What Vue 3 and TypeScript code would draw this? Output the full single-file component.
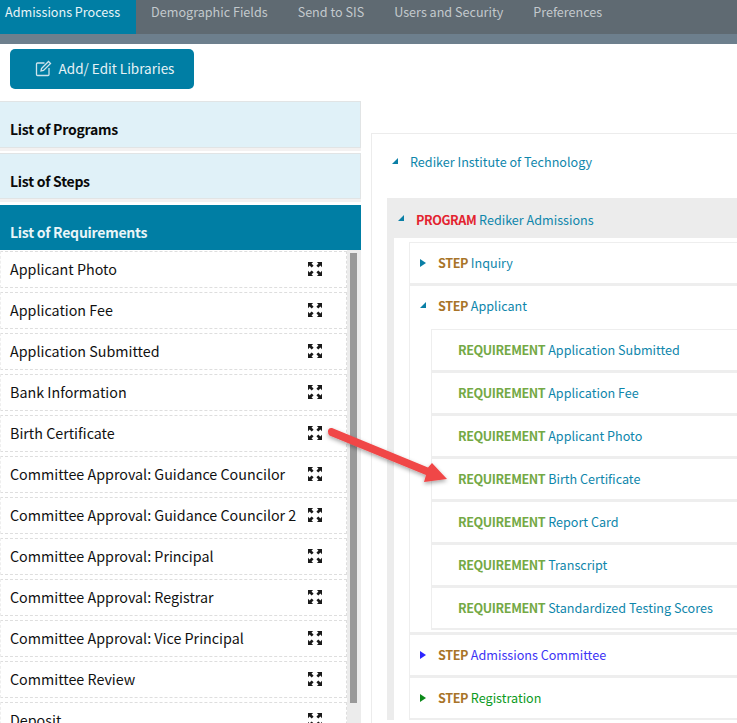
<script setup lang="ts">
const tabs = ['Admissions Process', 'Demographic Fields', 'Send to SIS', 'Users and Security', 'Preferences']
const items = [
  'Applicant Photo', 'Application Fee', 'Application Submitted', 'Bank Information', 'Birth Certificate',
  'Committee Approval: Guidance Councilor', 'Committee Approval: Guidance Councilor 2', 'Committee Approval: Principal',
  'Committee Approval: Registrar', 'Committee Approval: Vice Principal', 'Committee Review', 'Deposit'
]
const reqs = ['Application Submitted', 'Application Fee', 'Applicant Photo', 'Birth Certificate', 'Report Card', 'Transcript', 'Standardized Testing Scores']
</script>

<template>
  <div class="page">
    <nav class="tabs">
      <span v-for="(t, i) in tabs" :key="t" class="tab" :class="{ active: i === 0 }">{{ t }}</span>
    </nav>
    <div class="band"></div>
    <div class="content">
      <aside class="left">
        <button class="btn">
          <svg width="17" height="17" viewBox="0 0 17 17" fill="none" stroke="#cfe4ec" stroke-width="1.3">
            <path d="M9.500 3H2.500a1 1 0 0 0-1 1v10.500a1 1 0 0 0 1 1H13a1 1 0 0 0 1-1V8" />
            <path d="M6.500 8.500 13.500 1.500l2 2-7 7-2.500.5z" />
          </svg>
          <span>Add/ Edit Libraries</span>
        </button>
        <div class="head light">List of Programs</div>
        <div class="head light second">List of Steps</div>
        <div class="head teal">List of Requirements</div>
        <div class="listwrap">
          <ul class="list">
            <li v-for="it in items" :key="it" class="row">
              <span>{{ it }}</span>
              <svg class="exp" width="14" height="14" viewBox="0 0 15 15" fill="#1a1a1a">
                <path d="M0 0h5.500L3.800 1.700 6 3.900 3.900 6 1.700 3.800 0 5.500z" />
                <path d="M15 0v5.500L13.300 3.800 11.100 6 9 3.900 11.200 1.700 9.500 0z" />
                <path d="M0 15V9.500l1.700 1.700L3.900 9 6 11.100 3.800 13.300 5.500 15z" />
                <path d="M15 15H9.500l1.700-1.700L9 11.100 11.100 9l2.200 2.200L15 9.500z" />
              </svg>
            </li>
          </ul>
          <div class="track"><div class="thumb"></div></div>
        </div>
      </aside>
      <main class="right">
        <div class="root"><i class="tri open teal-c"></i><span class="link">Rediker Institute of Technology</span></div>
        <section class="program">
          <div class="prog-head"><i class="tri open teal-c"></i><span><b class="red">PROGRAM</b> <span class="link">Rediker Admissions</span></span></div>
          <div class="prog-body">
            <div class="step"><i class="tri closed teal-c"></i><span><b class="brown">STEP</b> <span class="link">Inquiry</span></span></div>
            <div class="step expanded">
              <div class="step-head"><i class="tri open teal-c"></i><span><b class="brown">STEP</b> <span class="link">Applicant</span></span></div>
              <div v-for="r in reqs" :key="r" class="req"><span><b class="green">REQUIREMENT</b> <span class="link">{{ r }}</span></span></div>
            </div>
            <div class="step"><i class="tri closed blue-c"></i><span><b class="brown">STEP</b> <span class="blue">Admissions Committee</span></span></div>
            <div class="step"><i class="tri closed green-c"></i><span><b class="brown">STEP</b> <span class="grn">Registration</span></span></div>
          </div>
        </section>
      </main>
    </div>
    <svg class="arrow" width="150" height="90" viewBox="0 0 150 90">
      <defs>
        <filter id="sh" x="-20%" y="-20%" width="140%" height="150%">
          <feDropShadow dx="0" dy="2" stdDeviation="2" flood-color="#000" flood-opacity=".35" />
        </filter>
      </defs>
      <path filter="url(#sh)" fill="#f04647" d="M7 6.500Q7 2.500 11 3L107 42.500 111 38 126 54 103 57 105 50 8.500 10.500Q7 9.500 7 6.500z" />
    </svg>
  </div>
</template>

<style>
html, body { margin: 0; background: #fff; }
</style>

<style scoped>
.page {
  position: relative;
  width: 737px;
  height: 723px;
  overflow: hidden;
  background: #fff;
  font-family: "Noto Sans CJK SC", "Noto Sans", sans-serif;
  font-size: 14.300px;
  color: #111;
}
.tabs { display: flex; height: 34px; background: #5f6a72; }
.tab {
  display: flex;
  align-items: center;
  height: 23px;
  padding: 0 15px 11px;
  color: #c3c9cd;
  font-size: 12.600px;
  white-space: nowrap;
}
.tab.active { background: #007ea4; color: #e8f4f8; padding: 0 16px 11px 5px; }
.band { height: 10px; background: #6d7f8d; }
.content { display: flex; }
.left { width: 361px; flex: none; }
.btn {
  display: flex;
  align-items: center;
  justify-content: center;
  gap: 7px;
  width: 184px;
  height: 40px;
  margin: 5px 0 12px 10px;
  padding: 0 0 2px 5px;
  background: #007ea4;
  color: #e6f2f6;
  border: 0;
  border-radius: 5px;
  font: inherit;
  font-size: 13.500px;
}
.head {
  box-sizing: border-box;
  padding: 17px 10px 0;
  font-size: 14px;
  letter-spacing: -.25px;
  font-weight: 700;
  line-height: 20px;
}
.light {
  height: 47px;
  background: #e0f1f8;
  border: 1px solid #e1e4e5;
  border-left: 0;
  color: #0a0a0a;
  box-shadow: 0 3px 0 #f3f1f1;
}
.light.second { height: 46px; margin-top: 5px; padding-top: 17px; }
.teal {
  height: 45px;
  margin-top: 6px;
  background: #007ea4;
  color: #e9f5f8;
  padding-top: 17px;
}
.listwrap { display: flex; height: 480px; }
.list { list-style: none; margin: 0; padding: 1px 0 0; width: 347px; flex: none; }
.row {
  box-sizing: border-box;
  display: flex;
  align-items: center;
  justify-content: space-between;
  height: 37px;
  margin: 0 0 4px;
  padding: 0 24px 0 9px;
  border: 1px dashed #dedede;
  border-left-color: #eee;
  background: #fff;
  white-space: nowrap;
}
.row > span { padding-bottom: 2px; }
.exp { flex: none; margin-top: -1px; }
.track { width: 14px; height: 480px; background: #ececec; padding: 3px 0 0 3px; box-sizing: border-box; }
.thumb { width: 7px; height: 450px; background: #999; }
.right {
  flex: 1;
  box-sizing: border-box;
  height: 700px;
  margin: 89px 0 0 10px;
  border: 1px solid #ececec;
  border-right: 0;
  font-size: 12.600px;
}
.tri { display: inline-block; flex: none; width: 0; height: 0; }
.tri.open { border-style: solid; border-width: 0 0 6px 6px; border-color: transparent transparent currentColor transparent; }
.tri.closed { border-style: solid; border-width: 4px 0 4px 6px; border-color: transparent transparent transparent currentColor; }
.teal-c { color: #0a7fa6; }
.blue-c { color: #2d25ff; }
.green-c { color: #0c8a1a; }
.link { color: #0e86ab; }
.red, .brown, .green { font-weight: 700; letter-spacing: -.4px; }
.red { color: #e3232f; }
.brown { color: #a87428; }
.green { color: #74a945; }
.blue { color: #3d33f5; }
.grn { color: #0b9a22; }
.root {
  display: flex;
  align-items: center;
  height: 64px;
  padding: 0 0 9px 20px;
  box-sizing: border-box;
  gap: 12px;
}
.root .tri { margin-top: -2px; }
.program { background: #ececec; margin-left: 15px; padding: 0 0 0 7px; }
.prog-head {
  display: flex;
  align-items: center;
  box-sizing: border-box;
  height: 40px;
  margin-left: -7px;
  padding: 2px 0 0 11px;
  white-space: nowrap;
}
.prog-head .tri { margin-right: 12px; margin-top: -2px; }
.prog-body { background: #fff; padding: 4px 0 0 15px; }
.step, .step-head {
  display: flex;
  align-items: center;
  height: 43px;
  box-sizing: border-box;
  white-space: nowrap;
  padding-left: 10px;
  padding-bottom: 2px;
}
.step { border: 1px solid #eee; border-right: 0; border-bottom-width: 2px; }
.step .tri { margin-right: 12px; margin-top: 1px; }
.step-head { padding-bottom: 4px; }
.step-head .tri { margin-top: -2px; }
.step.expanded { display: block; height: auto; padding-left: 0; padding-bottom: 2px; }
.req {
  display: flex;
  align-items: center;
  white-space: nowrap;
  box-sizing: border-box;
  height: 43px;
  margin-left: 21px;
  padding: 0 0 2px 26px;
  border: 1px solid #eee;
  border-right: 0;
  border-bottom-width: 2px;
}
.arrow { position: absolute; left: 321px; top: 425px; }
</style>
